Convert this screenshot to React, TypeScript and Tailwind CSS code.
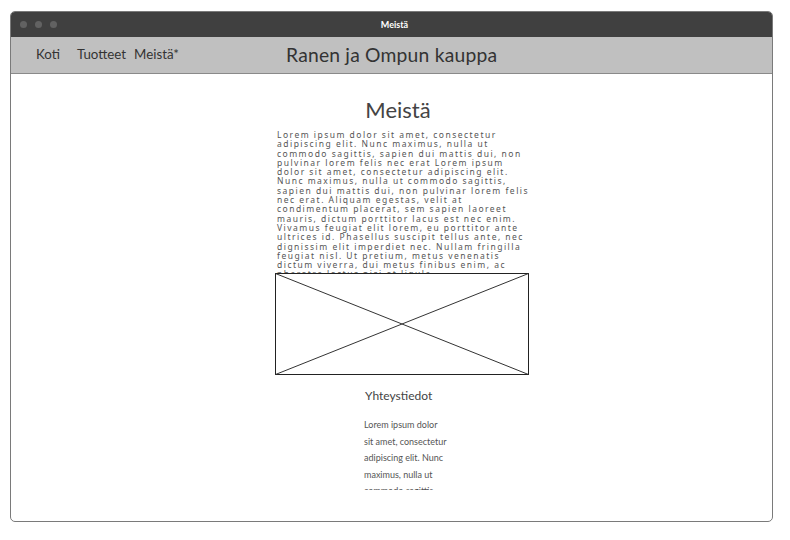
import React from 'react';

const lorem =
  'Lorem ipsum dolor sit amet, consectetur adipiscing elit. Nunc maximus, nulla ut commodo sagittis, sapien dui mattis dui, non pulvinar lorem felis nec erat Lorem ipsum dolor sit amet, consectetur adipiscing elit. Nunc maximus, nulla ut commodo sagittis, sapien dui mattis dui, non pulvinar lorem felis nec erat. Aliquam egestas, velit at condimentum placerat, sem sapien laoreet mauris, dictum porttitor lacus est nec enim. Vivamus feugiat elit lorem, eu porttitor ante ultrices id. Phasellus suscipit tellus ante, nec dignissim elit imperdiet nec. Nullam fringilla feugiat nisl. Ut pretium, metus venenatis dictum viverra, dui metus finibus enim, ac pharetra lectus nisi et ligula.';

const contactLines = [
  'Lorem ipsum dolor',
  'sit amet, consectetur',
  'adipiscing elit. Nunc',
  'maximus, nulla ut',
  'commodo sagittis,',
  'sapien dui mattis dui.',
];

export default function App() {
  return (
    <div className="w-[790px] h-[540px] bg-white pt-[11px] pl-[10px] font-['Lato',sans-serif]">
      <div className="w-[763px] h-[511px] rounded-[5px] border border-[#7a7a7a] overflow-hidden flex flex-col">
        {/* title bar */}
        <div className="h-[25px] bg-[#404040] flex items-center relative shrink-0">
          <div className="flex gap-[8px] pl-[9px]">
            <span className="w-[7px] h-[7px] rounded-full bg-[#626262]" />
            <span className="w-[7px] h-[7px] rounded-full bg-[#626262]" />
            <span className="w-[7px] h-[7px] rounded-full bg-[#626262]" />
          </div>
          <span className="absolute left-[6px] right-0 text-center text-white text-[9px] font-bold">Meistä</span>
        </div>

        {/* nav */}
        <div className="h-[37px] bg-[#c0c0c0] border-b border-[#8a8a8a] flex items-center shrink-0 text-[#333]">
          <div className="flex items-center text-[13.3px] pl-[25px] gap-[17px] w-[275px]">
            <span>Koti</span>
            <div className="flex gap-[8px]">
              <span>Tuotteet</span>
              <span>Meistä*</span>
            </div>
          </div>
          <span className="text-[19.3px] tracking-[0.2px]">Ranen ja Ompun kauppa</span>
        </div>

        {/* content */}
        <div className="flex-1 pl-[264px]">
          <div className="w-[254px] flex flex-col items-center">
            <h1 className="text-[22px] text-[#444] leading-none mt-[25px] mr-[8px]">Meistä</h1>
            <div className="h-[143px] overflow-hidden mt-[9px] w-full">
              <p className="font-['Noto_Sans',sans-serif] w-[255px] text-[8.5px] leading-[9.3px] tracking-[1.48px] text-[#555] pl-[2px]">
                {lorem}
              </p>
            </div>
            <svg width="254" height="102" className="block">
              <rect x="0.5" y="0.5" width="253" height="101" fill="white" stroke="#222" />
              <line x1="0.5" y1="0.5" x2="253.5" y2="101.5" stroke="#333" />
              <line x1="0.5" y1="101.5" x2="253.5" y2="0.5" stroke="#333" />
            </svg>
            <div className="self-start ml-[90px] mt-[12px] text-[12px] text-[#444]">Yhteystiedot</div>
            <div className="self-start ml-[89px] mt-[12px] w-[120px] h-[73px] overflow-hidden">
              {contactLines.map(l => (
                <div key={l} className="text-[9px] leading-[16.6px] text-[#555] whitespace-nowrap">{l}</div>
              ))}
            </div>
          </div>
        </div>
      </div>
    </div>
  );
}
